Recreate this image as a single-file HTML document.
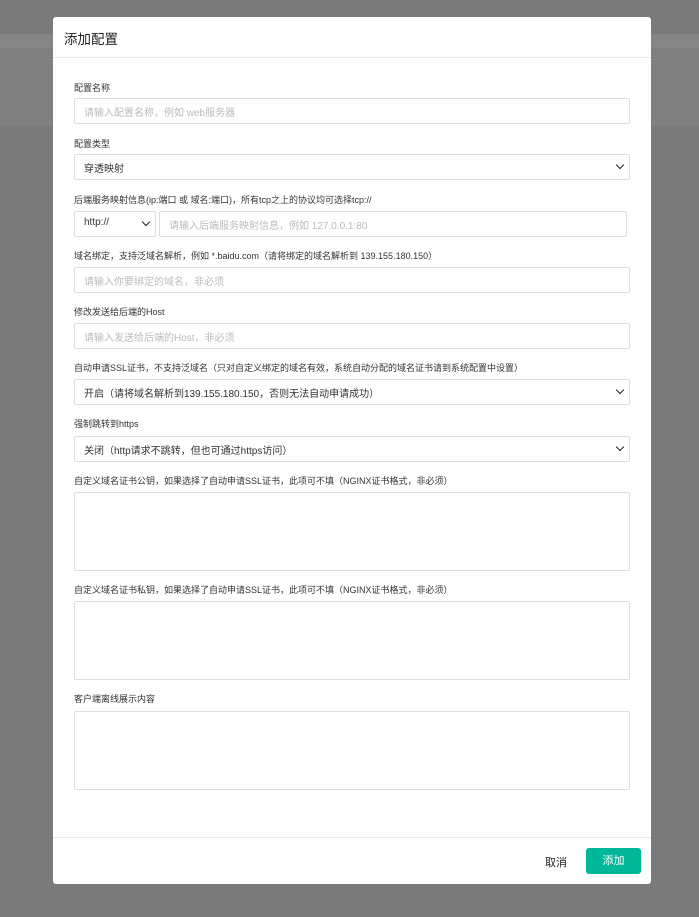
<!DOCTYPE html>
<html><head><meta charset="utf-8"><style>
*{box-sizing:border-box;margin:0;padding:0}
body{width:699px;height:917px;background:#7a7a7a;font-family:"Liberation Sans","Noto Sans CJK SC",sans-serif;position:relative;overflow:hidden}
.band{position:absolute;left:0;right:0;top:34px;height:14px;background:#858585}
.band2{position:absolute;left:0;right:0;top:48px;height:78px;background:#808080}
.modal{position:absolute;left:53px;top:17px;width:598px;height:867px;background:#fff;border-radius:3px}
.hd{height:41px;border-bottom:1px solid #e8e8e8;padding:11px 0 0 11px;font-size:13.5px;color:#222}
.lab{position:absolute;left:21px;font-size:9px;color:#333}
.inp{position:absolute;left:21px;width:556px;height:26px;border:1px solid #ddd;border-radius:2px;font-size:10px;color:#bbb;padding:5px 9px;white-space:nowrap}
.sel{color:#333}
.sel:after{content:"";position:absolute;right:6px;top:7px;width:5px;height:5px;border-right:1.6px solid #222;border-bottom:1.6px solid #222;transform:rotate(45deg)}
.ta{position:absolute;left:21px;width:556px;height:79px;border:1px solid #ddd;border-radius:2px}
.ft{position:absolute;left:0;right:0;top:820px;border-top:1px solid #e8e8e8}
.btn{position:absolute;left:533px;top:831px;width:55px;height:26px;background:#00b899;border-radius:3px;color:#fff;font-size:11px;text-align:center;line-height:26px}
.cancel{position:absolute;left:492px;top:837px;font-size:11px;color:#222}
</style></head><body>
<div class="band"></div><div class="band2"></div>
<div class="modal">
<div class="hd">添加配置</div>
<div class="lab" style="top:64px">配置名称</div>
<div class="inp" style="top:81px">请输入配置名称，例如 web服务器</div>
<div class="lab" style="top:120px">配置类型</div>
<div class="inp sel" style="top:137px">穿透映射</div>
<div class="lab" style="top:176px">后端服务映射信息(ip:端口 或 域名:端口)，所有tcp之上的协议均可选择tcp://</div>
<div class="inp sel" style="top:194px;width:82px">http://</div>
<div class="inp" style="top:194px;left:106px;width:468px">请输入后端服务映射信息，例如 127.0.0.1:80</div>
<div class="lab" style="top:232px">域名绑定，支持泛域名解析，例如 *.baidu.com（请将绑定的域名解析到 139.155.180.150）</div>
<div class="inp" style="top:250px">请输入你要绑定的域名，非必须</div>
<div class="lab" style="top:288px">修改发送给后端的Host</div>
<div class="inp" style="top:306px">请输入发送给后端的Host，非必须</div>
<div class="lab" style="top:344px">自动申请SSL证书，不支持泛域名（只对自定义绑定的域名有效，系统自动分配的域名证书请到系统配置中设置）</div>
<div class="inp sel" style="top:362px">开启（请将域名解析到139.155.180.150，否则无法自动申请成功）</div>
<div class="lab" style="top:400px">强制跳转到https</div>
<div class="inp sel" style="top:419px">关闭（http请求不跳转，但也可通过https访问）</div>
<div class="lab" style="top:457px">自定义域名证书公钥，如果选择了自动申请SSL证书，此项可不填（NGINX证书格式，非必须）</div>
<div class="ta" style="top:475px"></div>
<div class="lab" style="top:566px">自定义域名证书私钥，如果选择了自动申请SSL证书，此项可不填（NGINX证书格式，非必须）</div>
<div class="ta" style="top:584px"></div>
<div class="lab" style="top:675px">客户端离线展示内容</div>
<div class="ta" style="top:694px"></div>
<div class="ft"></div>
<div class="cancel">取消</div>
<div class="btn">添加</div>
</div>
</body></html>
